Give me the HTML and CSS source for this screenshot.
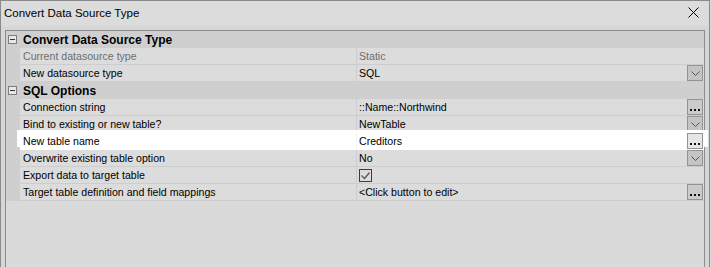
FILE: index.html
```html
<!DOCTYPE html>
<html lang="en">
<head>
    <meta charset="UTF-8">
    <title>Convert Data Source Type</title>
    <link rel="stylesheet" href="styles.css">
</head>
<body>

<div class="window">
    <div class="titlebar">
        <span class="title">Convert Data Source Type</span>
        <svg class="close" width="11" height="11" viewBox="0 0 11 11">
            <path d="M0.5 0.5 L10.5 10.5 M10.5 0.5 L0.5 10.5" stroke="#000" stroke-width="1"/>
        </svg>
    </div>
    <div class="client">
        <div class="grid">
            <div class="category">
                <span class="expander"></span>
                <span class="cat-label">Convert Data Source Type</span>
            </div>
            <div class="prop readonly">
                <span class="gutter"></span>
                <div class="cells">
                    <span class="name">Current datasource type</span>
                    <span class="value"><span class="text">Static</span></span>
                </div>
            </div>
            <div class="prop">
                <span class="gutter"></span>
                <div class="cells">
                    <span class="name">New datasource type</span>
                    <span class="value"><span class="text">SQL</span><span class="btn drop"><svg width="9" height="5" viewBox="0 0 9 5"><path d="M0.5 0.5 L4.5 4.5 L8.5 0.5" fill="none" stroke="#555"/></svg></span></span>
                </div>
            </div>
            <div class="category">
                <span class="expander"></span>
                <span class="cat-label">SQL Options</span>
            </div>
            <div class="prop">
                <span class="gutter"></span>
                <div class="cells">
                    <span class="name">Connection string</span>
                    <span class="value"><span class="text">::Name::Northwind</span><span class="btn dots"><i></i><i></i><i></i></span></span>
                </div>
            </div>
            <div class="prop">
                <span class="gutter"></span>
                <div class="cells">
                    <span class="name">Bind to existing or new table?</span>
                    <span class="value"><span class="text">NewTable</span><span class="btn drop"><svg width="9" height="5" viewBox="0 0 9 5"><path d="M0.5 0.5 L4.5 4.5 L8.5 0.5" fill="none" stroke="#555"/></svg></span></span>
                </div>
            </div>
            <div class="prop selected">
                <span class="gutter"></span>
                <div class="cells">
                    <span class="name">New table name</span>
                    <span class="value"><span class="text">Creditors</span><span class="btn dots"><i></i><i></i><i></i></span></span>
                </div>
            </div>
            <div class="prop">
                <span class="gutter"></span>
                <div class="cells">
                    <span class="name">Overwrite existing table option</span>
                    <span class="value"><span class="text">No</span><span class="btn drop"><svg width="9" height="5" viewBox="0 0 9 5"><path d="M0.5 0.5 L4.5 4.5 L8.5 0.5" fill="none" stroke="#555"/></svg></span></span>
                </div>
            </div>
            <div class="prop">
                <span class="gutter"></span>
                <div class="cells">
                    <span class="name">Export data to target table</span>
                    <span class="value"><span class="check"><svg width="11" height="11" viewBox="0 0 11 11"><path d="M1.5 5.5 L4.5 8.5 L9.5 2.5" fill="none" stroke="#555" stroke-width="1.2"/></svg></span></span>
                </div>
            </div>
            <div class="prop">
                <span class="gutter"></span>
                <div class="cells">
                    <span class="name">Target table definition and field mappings</span>
                    <span class="value"><span class="text">&lt;Click button to edit&gt;</span><span class="btn dots"><i></i><i></i><i></i></span></span>
                </div>
            </div>
        </div>
    </div>
</div>

</body>
</html>
```

FILE: styles.css
```css
body {
    margin: 0;
    padding: 0;
    background-color: #dadada;
    font-family: 'Liberation Sans', Arial, sans-serif;
    color: #000;
}
.window {
    width: 710px;
    height: 267px;
    box-sizing: border-box;
    border: 1px solid #8a8a8a;
    border-bottom: none;
    background-color: #dadada;
    display: flex;
    flex-direction: column;
}
.titlebar {
    height: 25px;
    display: flex;
    align-items: center;
    justify-content: space-between;
    padding: 0 10px 0 3px;
    background-color: #dcdcdc;
}
.title {
    font-size: 11.5px;
    margin-top: -1px;
}
.close {
    display: block;
    margin-top: -2px;
}
.client {
    flex: 1;
    display: flex;
    padding: 4px 4px 0 4px;
    background-color: #d6d6d6;
}
.grid {
    flex: 1;
    border: 1px solid #8c8c8c;
    border-bottom: none;
    background-color: #dadada;
    font-size: 10.6px;
    line-height: 16px;
}
.category {
    height: 17px;
    display: flex;
    align-items: center;
    background-color: #cfcfcf;
}
.expander {
    width: 7px;
    height: 7px;
    border: 1px solid #7d7d7d;
    background-color: #e8e8e8;
    margin: 0 6px 0 2px;
    position: relative;
}
.expander::after {
    content: "";
    position: absolute;
    left: 1px;
    right: 1px;
    top: 3px;
    height: 1px;
    background-color: #333;
}
.cat-label {
    font-weight: bold;
    font-size: 12px;
}
.prop {
    display: flex;
    height: 17px;
}
.gutter {
    width: 14px;
    flex-shrink: 0;
    background-color: #cfcfcf;
}
.cells {
    flex: 1;
    display: flex;
    height: 16px;
    border-bottom: 1px solid #cdcdcd;
    background-color: #dcdcdc;
}
.name {
    width: 333px;
    padding-left: 3px;
    white-space: nowrap;
}
.value {
    flex: 1;
    display: flex;
    align-items: center;
    border-left: 1px solid #cdcdcd;
    padding-left: 2px;
    padding-right: 1px;
}
.value .text {
    flex: 1;
    white-space: nowrap;
}
.readonly .name,
.readonly .value {
    color: #6d6d6d;
}
.selected .cells {
    background-color: #fff;
    border-bottom-color: #fff;
    box-shadow: -3px -3px 0 #fff, 4px -3px 0 #fff;
}
.selected .value {
    border-left-color: #f2f2f2;
}
.btn {
    width: 14px;
    height: 14px;
    border: 1px solid #939393;
    background-color: #c4c4c4;
    display: flex;
}
.drop {
    align-items: center;
    justify-content: center;
    padding-top: 1px;
    height: 13px;
}
.dots {
    align-items: flex-end;
    justify-content: center;
    gap: 2px;
    height: 11px;
    padding-bottom: 3px;
    background-color: #cbcbcb;
}
.selected .dots {
    background-color: #e6e6e6;
}
.dots i {
    width: 2px;
    height: 2px;
    background-color: #111;
}
.check {
    width: 11px;
    height: 11px;
    border: 1px solid #3c3c3c;
    background-color: #dcdcdc;
    display: flex;
}
```
